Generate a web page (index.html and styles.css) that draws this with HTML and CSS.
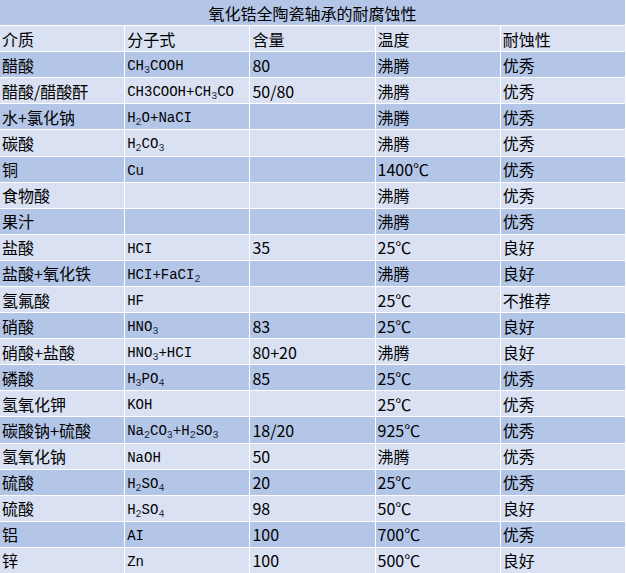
FILE: index.html
```html
<!DOCTYPE html>
<html lang="zh-CN">
<head>
<meta charset="utf-8">
<title>氧化锆全陶瓷轴承的耐腐蚀性</title>
<link rel="stylesheet" href="styles.css">
</head>
<body>
<div class="sheet">
  <div class="title">氧化锆全陶瓷轴承的耐腐蚀性</div>

  <div class="row light"><div class="c">介质</div><div class="c">分子式</div><div class="c">含量</div><div class="c">温度</div><div class="c">耐蚀性</div></div>

  <div class="row dark"><div class="c">醋酸</div><div class="c f"><span>CH<sub>3</sub>COOH</span></div><div class="c">80</div><div class="c">沸腾</div><div class="c">优秀</div></div>
  <div class="row light"><div class="c">醋酸/醋酸酐</div><div class="c f"><span>CH3COOH+CH<sub>3</sub>CO</span></div><div class="c">50/80</div><div class="c">沸腾</div><div class="c">优秀</div></div>
  <div class="row dark"><div class="c">水+氯化钠</div><div class="c f"><span>H<sub>2</sub>O+NaCI</span></div><div class="c"></div><div class="c">沸腾</div><div class="c">优秀</div></div>
  <div class="row light"><div class="c">碳酸</div><div class="c f"><span>H<sub>2</sub>CO<sub>3</sub></span></div><div class="c"></div><div class="c">沸腾</div><div class="c">优秀</div></div>
  <div class="row dark"><div class="c">铜</div><div class="c f"><span>Cu</span></div><div class="c"></div><div class="c">1400℃</div><div class="c">优秀</div></div>
  <div class="row light"><div class="c">食物酸</div><div class="c f"></div><div class="c"></div><div class="c">沸腾</div><div class="c">优秀</div></div>
  <div class="row dark"><div class="c">果汁</div><div class="c f"></div><div class="c"></div><div class="c">沸腾</div><div class="c">优秀</div></div>
  <div class="row light"><div class="c">盐酸</div><div class="c f"><span>HCI</span></div><div class="c">35</div><div class="c">25℃</div><div class="c">良好</div></div>
  <div class="row dark"><div class="c">盐酸+氧化铁</div><div class="c f"><span>HCI+FaCI<sub>2</sub></span></div><div class="c"></div><div class="c">沸腾</div><div class="c">良好</div></div>
  <div class="row light"><div class="c">氢氟酸</div><div class="c f"><span>HF</span></div><div class="c"></div><div class="c">25℃</div><div class="c">不推荐</div></div>
  <div class="row dark"><div class="c">硝酸</div><div class="c f"><span>HNO<sub>3</sub></span></div><div class="c">83</div><div class="c">25℃</div><div class="c">良好</div></div>
  <div class="row light"><div class="c">硝酸+盐酸</div><div class="c f"><span>HNO<sub>3</sub>+HCI</span></div><div class="c">80+20</div><div class="c">沸腾</div><div class="c">良好</div></div>
  <div class="row dark"><div class="c">磷酸</div><div class="c f"><span>H<sub>3</sub>PO<sub>4</sub></span></div><div class="c">85</div><div class="c">25℃</div><div class="c">优秀</div></div>
  <div class="row light"><div class="c">氢氧化钾</div><div class="c f"><span>KOH</span></div><div class="c"></div><div class="c">25℃</div><div class="c">优秀</div></div>
  <div class="row dark"><div class="c">碳酸钠+硫酸</div><div class="c f"><span>Na<sub>2</sub>CO<sub>3</sub>+H<sub>2</sub>SO<sub>3</sub></span></div><div class="c">18/20</div><div class="c">925℃</div><div class="c">优秀</div></div>
  <div class="row light"><div class="c">氢氧化钠</div><div class="c f"><span>NaOH</span></div><div class="c">50</div><div class="c">沸腾</div><div class="c">优秀</div></div>
  <div class="row dark"><div class="c">硫酸</div><div class="c f"><span>H<sub>2</sub>SO<sub>4</sub></span></div><div class="c">20</div><div class="c">25℃</div><div class="c">优秀</div></div>
  <div class="row light"><div class="c">硫酸</div><div class="c f"><span>H<sub>2</sub>SO<sub>4</sub></span></div><div class="c">98</div><div class="c">50℃</div><div class="c">良好</div></div>
  <div class="row dark"><div class="c">铝</div><div class="c f"><span>AI</span></div><div class="c">100</div><div class="c">700℃</div><div class="c">优秀</div></div>
  <div class="row light"><div class="c">锌</div><div class="c f"><span>Zn</span></div><div class="c">100</div><div class="c">500℃</div><div class="c">良好</div></div>
</div>
</body>
</html>
```
FILE: styles.css
```css
html, body {
  margin: 0;
  padding: 0;
  background: #ffffff;
}

.sheet {
  width: 625px;
  height: 573px;
  padding-right: 1px;
  display: grid;
  grid-template-columns: repeat(5, 1fr);
  grid-template-rows: repeat(22, 1fr);
  gap: 1px;
  background: #ffffff;
  font-family: "Noto Sans CJK SC", "Noto Sans CJK JP", sans-serif;
  font-size: 16px;
  color: #000000;
}

.title {
  grid-column: 1 / -1;
  background: #b4c6e7;
  display: flex;
  align-items: center;
  justify-content: center;
  line-height: 1;
}

.row {
  display: contents;
}

.c {
  display: flex;
  align-items: center;
  padding-left: 2px;
  line-height: 1;
  white-space: nowrap;
  overflow: hidden;
}

.dark .c {
  background: #b4c6e7;
}

.light .c {
  background: #d9e1f2;
}

.f {
  font-family: "Liberation Mono", "DejaVu Sans Mono", monospace;
  font-size: 14px;
  padding-top: 3px;
}

.f span {
  display: block;
  line-height: 16px;
}

.f sub {
  font-size: 10px;
  position: relative;
  top: 3px;
  vertical-align: baseline;
  line-height: 0;
  color: #1f2a44;
}
```
